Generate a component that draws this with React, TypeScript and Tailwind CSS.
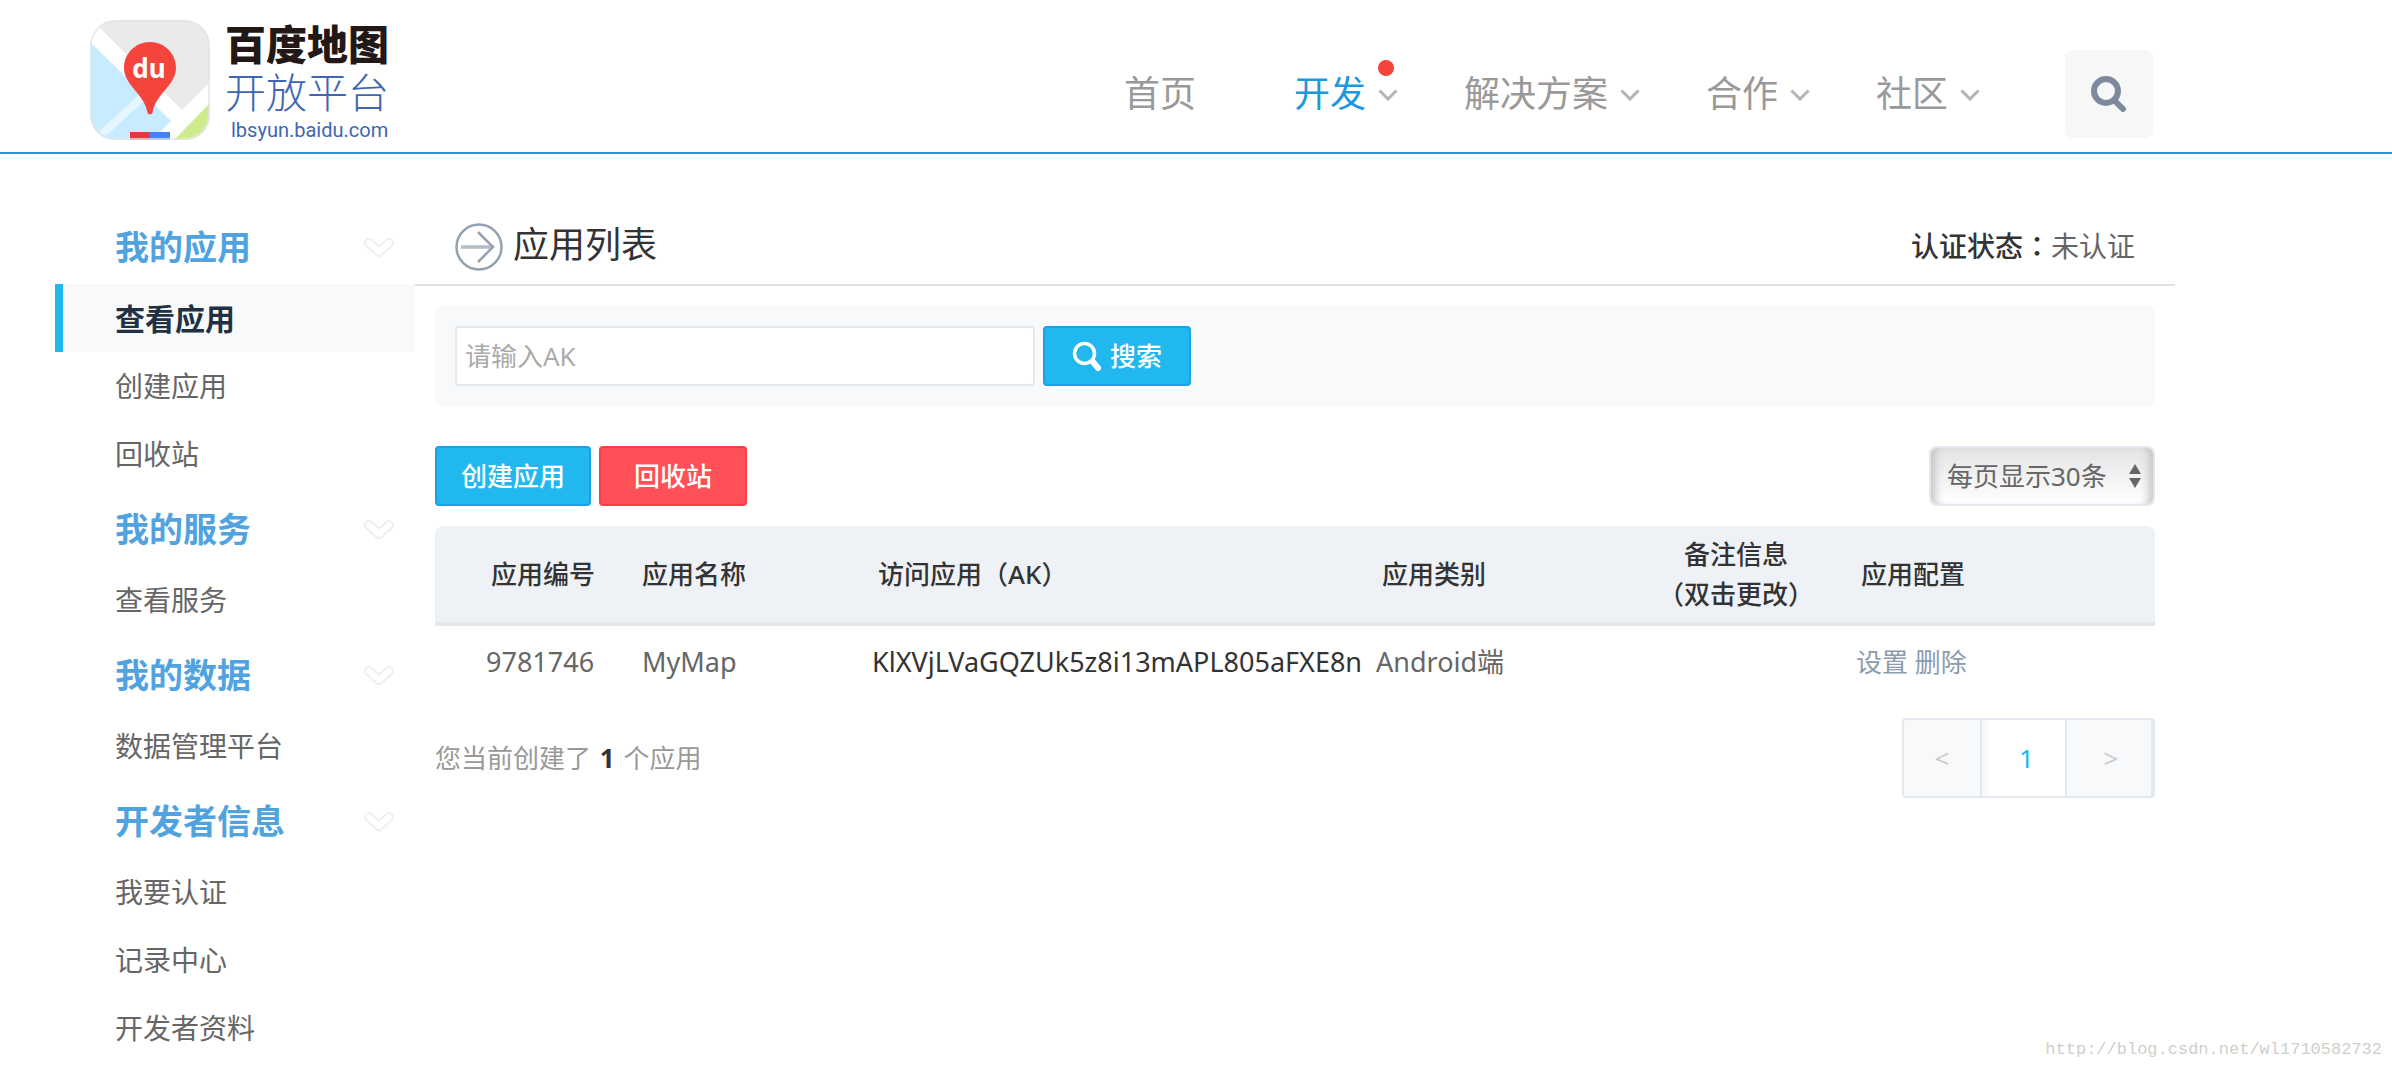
import { useState } from "react";

type NavItem = { label: string; active?: boolean; menu?: boolean; dot?: boolean };

const navItems: NavItem[] = [
  { label: "首页" },
  { label: "开发", active: true, menu: true, dot: true },
  { label: "解决方案", menu: true },
  { label: "合作", menu: true },
  { label: "社区", menu: true },
];

const sections = [
  { title: "我的应用", items: ["查看应用", "创建应用", "回收站"] },
  { title: "我的服务", items: ["查看服务"] },
  { title: "我的数据", items: ["数据管理平台"] },
  { title: "开发者信息", items: ["我要认证", "记录中心", "开发者资料"] },
];

const apps = [
  {
    id: "9781746",
    name: "MyMap",
    ak: "KlXVjLVaGQZUk5z8i13mAPL805aFXE8n",
    type: "Android端",
    remark: "",
  },
];

function LogoMark() {
  return (
    <svg viewBox="0 0 120 120" className="h-[120px] w-[120px]" aria-hidden="true">
      <defs>
        <clipPath id="logo-clip">
          <rect width="120" height="120" rx="25" />
        </clipPath>
      </defs>
      <g clipPath="url(#logo-clip)">
        <rect width="120" height="120" fill="#fff" />
        <path d="M10 8 2 0h118v62L92 90Z" fill="#eaeaea" />
        <path d="M0 22 81 101 62 120H0Z" fill="#c7ebff" />
        <path d="M12 114 58 72" stroke="#e6f6ff" strokeWidth="8" />
        <path d="M120 83v37H84Z" fill="#cdec8e" />
        <path d="M40 112h20v8H40z" fill="#e03a42" />
        <path d="M60 112h20v8H60z" fill="#4680fa" />
        <path
          d="M60 22c14.500 0 26 11.500 26 26 0 17-20.500 26-23.500 44.500-.6 2.500-4.400 2.500-5 0C54.500 74 34 65 34 48c0-14.500 11.500-26 26-26Z"
          fill="#f4443c"
        />
        <text
          x="59"
          y="58"
          textAnchor="middle"
          fill="#fff"
          fontSize="26"
          fontWeight="700"
          fontFamily="Noto Sans, sans-serif"
        >
          du
        </text>
      </g>
      <rect x="1" y="1" width="118" height="118" rx="25" fill="none" stroke="#e4e6e6" strokeWidth="1.500" />
    </svg>
  );
}

function SearchBold({ className }: { className: string }) {
  return (
    <svg viewBox="0 0 36 36" className={className} fill="none" stroke="currentColor" aria-hidden="true">
      <circle cx="15" cy="15" r="12" strokeWidth="6" />
      <path d="m25 26 7 7" strokeWidth="6" strokeLinecap="round" />
    </svg>
  );
}

function Header() {
  return (
    <header className="border-b-2 border-[#1e98dc]">
      <div className="ml-[55px] flex h-[152px] max-w-[2120px] items-center justify-between pr-[22px] pl-[35px]">
        <a href="#" className="flex items-center gap-[15px] pt-2">
          <LogoMark />
          <span className="flex flex-col pt-1">
            <span className="text-[41px] leading-[48px] font-black text-[#231815]">百度地图</span>
            <span className="text-[41px] leading-[48px] font-light text-[#4066b0]">开放平台</span>
            <span className="pl-[6px] font-[Roboto] text-[20px] leading-[28px] text-[#4066b0]">
              lbsyun.baidu.com
            </span>
          </span>
        </a>

        <div className="flex items-center pt-9">
          <nav className="flex gap-[98px]">
            {navItems.map((item) => (
              <a
                key={item.label}
                href="#"
                className={`relative text-[36px] leading-[44px] ${
                  item.active ? "text-[#1e98dc]" : "text-[#999]"
                }`}
              >
                {item.label}
                {item.dot && (
                  <span className="absolute -top-3 left-full ml-3 h-4 w-4 rounded-full bg-[#f4443c]" />
                )}
                {item.menu && (
                  <svg
                    viewBox="0 0 20 12"
                    className="absolute top-[17px] left-full ml-3 h-3 w-5"
                    fill="none"
                    stroke="#b4b4b4"
                    strokeWidth="3"
                    aria-hidden="true"
                  >
                    <path d="m1.500 1.500 8.500 8.500 8.500-8.500" />
                  </svg>
                )}
              </a>
            ))}
          </nav>
          <button
            type="button"
            aria-label="搜索"
            className="ml-[117px] flex h-[88px] w-[88px] items-center justify-center rounded-lg bg-[#f7f7f7] text-[#7d8a9b]"
          >
            <SearchBold className="h-9 w-9" />
          </button>
        </div>
      </div>
    </header>
  );
}

function Sidebar() {
  const [current, setCurrent] = useState("查看应用");

  return (
    <aside className="w-[360px] shrink-0">
      {sections.map((section) => (
        <section key={section.title}>
          <h2 className="flex h-[78px] items-center justify-between pt-1 pr-5 pl-[60px] text-[34px] font-bold text-[#51a3e0]">
            {section.title}
            <svg
              viewBox="0 0 32 24"
              className="mt-1 h-6 w-8"
              fill="none"
              strokeLinecap="round"
              strokeLinejoin="round"
              aria-hidden="true"
            >
              <path d="m6 6 10 9 10-9" stroke="#efefef" strokeWidth="10" />
              <path d="m6 6 10 9 10-9" stroke="#fff" strokeWidth="6" />
            </svg>
          </h2>
          <ul>
            {section.items.map((item) => (
              <li key={item}>
                <a
                  href="#"
                  onClick={() => setCurrent(item)}
                  className={`flex h-[68px] items-center border-l-8 pl-[52px] ${
                    item === current
                      ? "border-[#20b8ee] bg-[#f8f9fb] text-[30px] font-bold text-[#223044]"
                      : "border-transparent text-[28px] text-[#666]"
                  }`}
                >
                  {item}
                </a>
              </li>
            ))}
          </ul>
        </section>
      ))}
    </aside>
  );
}

function AppTable() {
  return (
    <table className="mt-5 w-full table-fixed border-separate border-spacing-0 text-left text-[26px] text-[#666]">
      <colgroup>
        <col className="w-[207px]" />
        <col className="w-[230px]" />
        <col className="w-[504px]" />
        <col className="w-[280px]" />
        <col className="w-[160px]" />
        <col />
      </colgroup>
      <thead className="text-[#333] [&_th]:border-b-4 [&_th]:border-[#e2e7ea] [&_th]:bg-[#eef2f6] [&_th]:font-medium">
        <tr className="h-[100px] leading-10">
          <th className="rounded-tl-lg pl-14">应用编号</th>
          <th>应用名称</th>
          <th className="pl-[6px]">访问应用（AK）</th>
          <th className="pl-[6px]">应用类别</th>
          <th className="text-center whitespace-nowrap">
            备注信息
            <br />
            （双击更改）
          </th>
          <th className="rounded-tr-lg pl-[45px]">应用配置</th>
        </tr>
      </thead>
      <tbody>
        {apps.map((app) => (
          <tr key={app.id} className="h-[72px] text-[27px]">
            <td className="pl-[51px]">{app.id}</td>
            <td>{app.name}</td>
            <td className="text-[#333]">{app.ak}</td>
            <td>{app.type}</td>
            <td>{app.remark}</td>
            <td className="pl-10 text-[26px] text-[#8c9bae]">
              <a href="#">设置</a> <a href="#">删除</a>
            </td>
          </tr>
        ))}
      </tbody>
    </table>
  );
}

function Pager() {
  return (
    <nav
      aria-label="分页"
      className="flex h-20 rounded border-2 border-r-4 border-[#e2e8ee] bg-[#f8f9fb] text-[26px] text-[#ccc]"
    >
      <button type="button" className="w-[76px]">
        &lt;
      </button>
      <span className="w-2 border-l-2 border-[#e2e8ee]" />
      <button type="button" className="w-[77px] bg-white text-[#20b8ee]">
        1
      </button>
      <button type="button" className="w-[86px] border-l-2 border-[#e2e8ee] pl-1">
        &gt;
      </button>
    </nav>
  );
}

export default function App() {
  const [ak, setAk] = useState("");

  return (
    <div className="relative min-h-screen bg-white font-['Noto_Sans','Noto_Sans_CJK_SC',sans-serif]">
      <Header />

      <div className="ml-[55px] flex max-w-[2120px] pt-[52px]">
        <Sidebar />

        <main className="min-w-0 flex-1">
          <div className="flex h-20 items-center justify-between border-b-2 border-[#dfe3e8] px-10">
            <h1 className="flex items-center gap-[10px] text-[36px] leading-[44px] text-[#333]">
              <svg
                viewBox="0 0 48 48"
                className="mt-1 h-12 w-12"
                fill="none"
                stroke="#94a1b0"
                strokeWidth="2.500"
                aria-hidden="true"
              >
                <circle cx="24" cy="24" r="22.500" />
                <path d="M6 24h31" stroke="#b4bcc8" strokeWidth="3.500" />
                <path d="m23 9 15 15-15 15" />
              </svg>
              应用列表
            </h1>
            <p className="text-[28px] text-[#666]">
              <span className="font-medium text-[#333]">
                认证状态<span className="font-['Noto_Sans_CJK_TC']">：</span>
              </span>
              未认证
            </p>
          </div>

          <div className="px-5 pt-5">
            <form
              onSubmit={(e) => e.preventDefault()}
              className="flex gap-2 rounded-lg bg-[#f8f9fb] p-5 text-[26px]"
            >
              <input
                type="text"
                aria-label="AK"
                value={ak}
                onChange={(e) => setAk(e.target.value)}
                placeholder="请输入AK"
                className="h-[60px] w-[580px] rounded border-2 border-[#e2e8ee] bg-white px-2 outline-none placeholder:text-[#aaa]"
              />
              <button
                type="submit"
                className="flex h-[60px] w-[148px] items-center justify-center gap-2 rounded border-2 border-[#1ba2e6] bg-[#20b8ee] font-medium text-white"
              >
                <svg viewBox="0 0 30 30" className="h-[30px] w-[30px]" fill="none" stroke="currentColor" aria-hidden="true">
                  <circle cx="12.500" cy="12.500" r="10" strokeWidth="3.500" />
                  <path d="m21 21 5 6" strokeWidth="6" strokeLinecap="round" />
                </svg>
                搜索
              </button>
            </form>

            <div className="mt-10 flex items-center gap-2 text-[26px] font-medium text-white">
              <button type="button" className="h-[60px] w-[156px] rounded border-2 border-[#1ba2e6] bg-[#20b8ee]">
                创建应用
              </button>
              <button type="button" className="h-[60px] w-[148px] rounded border-2 border-[#fd3e46] bg-[#ff5058]">
                回收站
              </button>
              <div className="relative ml-auto">
                <select
                  aria-label="每页显示"
                  className="h-[60px] w-[226px] appearance-none rounded-lg border-2 border-[#e2e8ee] bg-linear-to-b from-[#e4e4e4] to-white pl-4 font-normal text-[#666] shadow-[inset_10px_0_8px_-6px_#c4c4c4,inset_-10px_0_8px_-6px_#c4c4c4]"
                >
                  <option>每页显示30条</option>
                  <option>每页显示50条</option>
                </select>
                <svg
                  viewBox="0 0 12 24"
                  className="pointer-events-none absolute top-[18px] right-[14px] h-6 w-3"
                  fill="#666"
                  aria-hidden="true"
                >
                  <path d="M6 0l6 10H0zM6 24l6-10H0z" />
                </svg>
              </div>
            </div>

            <AppTable />

            <div className="mt-5 flex items-center justify-between">
              <p className="text-[26px] text-[#999]">
                您当前创建了 <b className="mx-[2px] text-[#333]">1</b> 个应用
              </p>
              <Pager />
            </div>
          </div>
        </main>
      </div>

      <div className="absolute right-[10px] bottom-[6px] font-['Liberation_Mono',monospace] text-[17px] text-[#cfcfca]">
        http://blog.csdn.net/wl1710582732
      </div>
    </div>
  );
}
